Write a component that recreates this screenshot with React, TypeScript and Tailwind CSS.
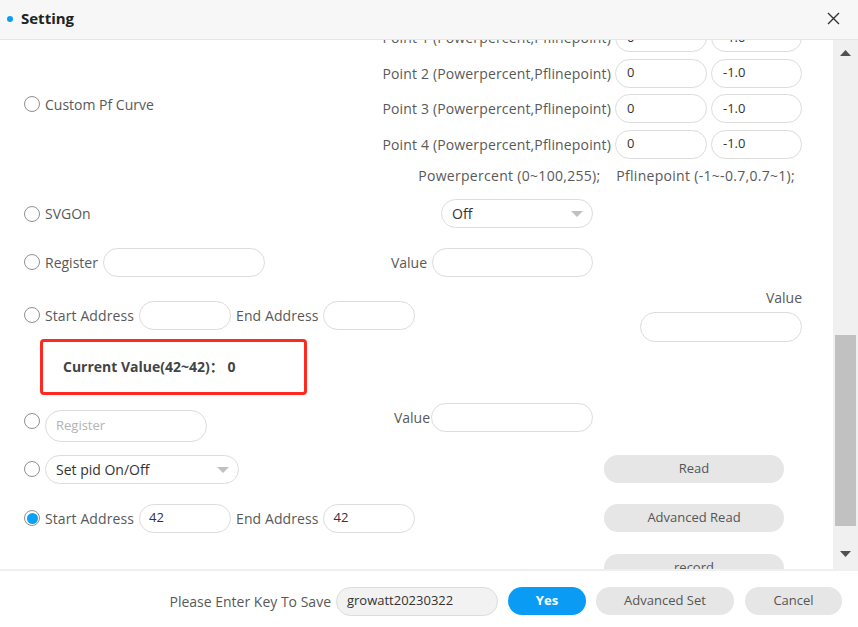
import React from 'react'

function Radio({ checked }: { checked?: boolean }) {
  return (
    <span className="w-[16px] h-[16px] rounded-full border border-[#8f8f8f] bg-white flex items-center justify-center shrink-0">
      {checked && <span className="w-[11px] h-[11px] rounded-full bg-[#0aa2f5]" />}
    </span>
  )
}

function Field({ w, h = 'h-[29px]', value, placeholder, pad = 'pl-[11px]' }: { w: string; h?: string; value?: string; placeholder?: string; pad?: string }) {
  return (
    <div className={`${w} ${h} ${pad} shrink-0 rounded-full border border-[#dcdcdc] bg-white flex items-center text-[13px]`}>
      {value ? <span className="text-[#333]">{value}</span> : <span className="text-[#b3b3b3]">{placeholder}</span>}
    </div>
  )
}

function Caret({ className }: { className?: string }) {
  return (
    <svg width="12" height="6" viewBox="0 0 12 6" className={className}>
      <path d="M0 0 L12 0 L6 6 Z" fill="#c0c0c0" />
    </svg>
  )
}

function Select({ w, value, caretRight }: { w: string; value: string; caretRight: string }) {
  return (
    <div className={`${w} h-[29px] shrink-0 rounded-full border border-[#dcdcdc] bg-white flex items-center pl-[10px] relative text-[14px] text-[#333]`}>
      {value}
      <Caret className={`absolute ${caretRight} top-[11px]`} />
    </div>
  )
}

function GrayButton({ label }: { label: string }) {
  return (
    <div className="w-[180px] h-[28px] shrink-0 rounded-full bg-[#e6e6e6] flex items-center justify-center text-[13px] text-[#555]">
      {label}
    </div>
  )
}

const POINTS = [1, 2, 3, 4]

export default function App() {
  return (
    <div className="w-[858px] h-[627px] flex flex-col bg-white font-['Open_Sans','Noto_Sans_CJK_SC',sans-serif] text-[14px] text-[#595959] overflow-hidden">
      {/* header */}
      <div className="h-[40px] shrink-0 bg-[#f7f7f7] border-b border-[#e6e6e6] flex items-center pl-[7px] pr-[18px] pb-[2px]">
        <span className="w-[6px] h-[6px] rounded-full bg-[#0a9cf5]" />
        <span className="ml-[8px] text-[15px] font-bold text-[#222]">Setting</span>
        <svg width="13" height="13" viewBox="0 0 13 13" className="ml-auto">
          <path d="M1 1 L12 12 M12 1 L1 12" stroke="#333" strokeWidth="1.4" />
        </svg>
      </div>

      {/* body */}
      <div className="flex flex-1 min-h-0">
        <div className="flex-1 overflow-hidden">
          <div className="-mt-[17px]">
            {/* custom pf curve */}
            <div className="flex items-center">
              <div className="pl-[24px] flex items-center gap-[5px]">
                <Radio />
                <span>Custom Pf Curve</span>
              </div>
              <div className="ml-auto mr-[31px] flex flex-col">
                <div className="flex flex-col gap-[6.5px]">
                  {POINTS.map(n => (
                    <div key={n} className="flex items-center justify-end">
                      <span className="mr-[4px] tracking-[0.15px]">Point {n} (Powerpercent,Pflinepoint)</span>
                      <Field w="w-[92px]" value="0" />
                      <Field w="w-[91px] ml-[4px]" value="-1.0" />
                    </div>
                  ))}
                </div>
                <div className="mt-[7px] h-[20px] leading-[20px] pr-[7px] text-right whitespace-pre tracking-[0.3px]">
                  {'Powerpercent (0~100,255);    Pflinepoint (-1~-0.7,0.7~1);'}
                </div>
              </div>
            </div>

            {/* SVGOn */}
            <div className="mt-[14px] h-[28px] flex items-center">
              <div className="w-[441px] pl-[24px] flex items-center gap-[5px]">
                <Radio />
                <span>SVGOn</span>
              </div>
              <Select w="w-[152px]" value="Off" caretRight="right-[9px]" />
            </div>

            {/* register */}
            <div className="mt-[20px] h-[29px] flex items-center">
              <div className="w-[380px] pl-[24px] flex items-center">
                <Radio />
                <span className="ml-[5px]">Register</span>
                <Field w="w-[162px] ml-[5px]" />
              </div>
              <div className="w-[213px] flex items-center justify-end">
                <span className="mr-[5px]">Value</span>
                <Field w="w-[161px]" />
              </div>
            </div>

            {/* start/end address */}
            <div className="mt-[24px] h-[29px] flex items-center">
              <div className="pl-[24px] flex items-center">
                <Radio />
                <span className="ml-[5px] tracking-[0.1px]">Start Address</span>
                <Field w="w-[92px] ml-[5px]" />
                <span className="ml-[5px] tracking-[0.1px]">End Address</span>
                <Field w="w-[92px] ml-[4px]" />
              </div>
              <div className="ml-auto mr-[31px] flex flex-col items-end">
                <span className="h-[20px] leading-[20px]">Value</span>
                <Field w="w-[162px] h-[30px] mt-[4px]" />
              </div>
            </div>

            {/* current value */}
            <div className="mt-[9px] ml-[40px] w-[267px] h-[56px] border-[3px] border-[#ff2a1f] rounded-[4px] flex items-center pl-[20px] font-bold text-[#444]">
              Current Value(42~42)：&nbsp;0
            </div>

            {/* register placeholder */}
            <div className="mt-[8px] flex items-start">
              <div className="w-[380px] pl-[24px] pt-[7px] flex items-start">
                <span className="mt-[3px]">
                  <Radio />
                </span>
                <Field w="w-[162px] ml-[5px]" h="h-[32px]" placeholder="Register" pad="pl-[10px]" />
              </div>
              <div className="w-[213px] flex items-center justify-end">
                <span className="mr-[1px]">Value</span>
                <Field w="w-[162px]" />
              </div>
            </div>

            {/* set pid */}
            <div className="mt-[13px] h-[29px] flex items-center">
              <div className="w-[604px] pl-[24px] flex items-center">
                <Radio />
                <span className="ml-[5px]">
                  <Select w="w-[194px]" value="Set pid On/Off" caretRight="right-[9px]" />
                </span>
              </div>
              <GrayButton label="Read" />
            </div>

            {/* start/end address checked */}
            <div className="mt-[20px] h-[29px] flex items-center">
              <div className="w-[604px] pl-[24px] flex items-center">
                <Radio checked />
                <span className="ml-[5px] tracking-[0.1px]">Start Address</span>
                <Field w="w-[92px] ml-[5px]" value="42" pad="pl-[9px]" />
                <span className="ml-[5px] tracking-[0.1px]">End Address</span>
                <Field w="w-[92px] ml-[4px]" value="42" pad="pl-[10px]" />
              </div>
              <GrayButton label="Advanced Read" />
            </div>

            {/* record */}
            <div className="mt-[21px] flex">
              <div className="w-[604px]" />
              <GrayButton label="record" />
            </div>
          </div>
        </div>

        {/* scrollbar */}
        <div className="w-[25px] shrink-0 bg-[#f0f0f0] flex flex-col items-center relative">
          <svg width="11" height="6" viewBox="0 0 11 6" className="mt-[10px]">
            <path d="M0 6 L5.5 0 L11 6 Z" fill="#505050" />
          </svg>
          <div className="absolute left-[2px] right-[2px] top-[295px] h-[191px] bg-[#c1c1c1]" />
          <svg width="11" height="6" viewBox="0 0 11 6" className="mt-auto mb-[12px]">
            <path d="M0 0 L11 0 L5.5 6 Z" fill="#505050" />
          </svg>
        </div>
      </div>

      {/* footer */}
      <div className="h-[58px] shrink-0 border-t-2 border-[#efefef] flex items-center justify-end pr-[16px] pt-[4px]">
        <span>Please Enter Key To Save</span>
        <div className="ml-[5px] w-[162px] h-[29px] rounded-full border border-[#dcdcdc] bg-[#f2f2f2] flex items-center pl-[10px] text-[13px] text-[#333]">
          growatt20230322
        </div>
        <div className="ml-[10px] w-[78px] h-[28px] rounded-full bg-[#0a9cf5] flex items-center justify-center text-[13px] font-bold text-white">
          Yes
        </div>
        <div className="ml-[10px] w-[138px] h-[28px] rounded-full bg-[#e6e6e6] flex items-center justify-center text-[13px] text-[#555]">
          Advanced Set
        </div>
        <div className="ml-[11px] w-[97px] h-[28px] rounded-full bg-[#e6e6e6] flex items-center justify-center text-[13px] text-[#555]">
          Cancel
        </div>
      </div>
    </div>
  )
}
